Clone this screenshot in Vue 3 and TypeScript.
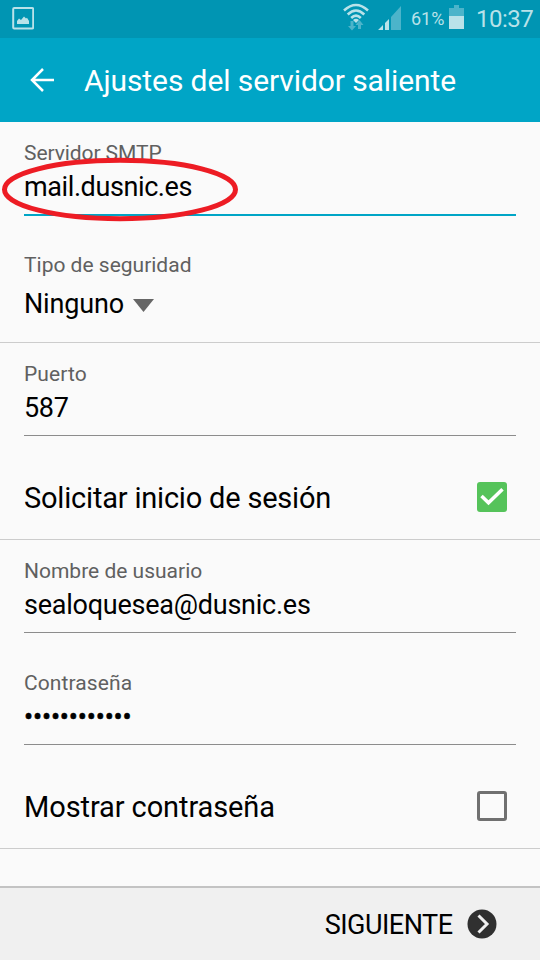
<script setup lang="ts">
import { ref } from 'vue'

const server = ref('mail.dusnic.es')
const security = ref('Ninguno')
const port = ref('587')
const user = ref('sealoquesea@dusnic.es')
const passwordLength = 12
const loginRequired = ref(true)
const showPassword = ref(false)
</script>

<template>
  <div class="screen">
    <div class="status">
      <svg class="picture" width="22" height="23" viewBox="0 0 22 23">
        <rect x="1.200" y="1" width="20" height="20.500" rx="1" fill="none" stroke="#b9e2e9" stroke-width="2" />
        <path d="M5 17V14l2-2.500 2 1.500 3-3.500 2 2 1-.8 2 3.300V17z" fill="#b9e2e9" />
      </svg>
      <svg class="wifi" width="26" height="28" viewBox="0 0 26 28">
        <g fill="none" stroke="#b9e2e9" stroke-width="2.500">
          <path d="M1 7.500Q13-3.500 25 7.500" />
          <path d="M4.700 11.500Q13 3.500 21.300 11.500" />
          <path d="M8.200 15Q13 10.200 17.800 15" />
        </g>
        <path d="M10 17Q13 14.600 16 17L13 20z" fill="#b9e2e9" />
        <path d="M7.500 18h3v5h2.500l-4 4.500-4-4.500h2.500zM15 26h3v-4h2.500l-4-5-4 5H15z" fill="#4cb4ca" />
      </svg>
      <svg class="signal" width="24" height="24" viewBox="0 0 24 24">
        <path d="M13 11L23 0v24H13z" fill="#4cb4ca" />
        <path d="M0 24l5-5v5zM7 17l4-4v11H7z" fill="#b9e2e9" />
      </svg>
      <span class="percent">61%</span>
      <svg class="battery" width="15" height="24" viewBox="0 0 15 24">
        <path d="M0 3h5V0h5v3h5v8H0z" fill="#4cb4ca" />
        <path d="M0 11h15v13H0z" fill="#b9e2e9" />
      </svg>
      <span class="clock">10:37</span>
    </div>

    <header class="header">
      <svg class="back" width="24" height="24" viewBox="0 0 24 24" fill="none" stroke="#fff" stroke-width="2.500">
        <path d="M13 1L2 12l11 11M2 12h22" />
      </svg>
      <h1 class="title">Ajustes del servidor saliente</h1>
    </header>

    <main class="form">
      <section class="group server">
        <div class="field active">
          <div class="label l-server">Servidor SMTP</div>
          <div class="value v-server">{{ server }}</div>
          <svg class="mark" width="238" height="66" viewBox="0 0 238 66">
            <ellipse cx="120" cy="33.500" rx="115.500" ry="29.200" fill="none" stroke="#ed1c24" stroke-width="5" />
          </svg>
        </div>
        <div class="select">
          <div class="label">Tipo de seguridad</div>
          <div class="choice">
            <span class="value v-security">{{ security }}</span>
            <svg class="caret" width="21" height="13" viewBox="0 0 21 13"><path d="M0 0h21L10.500 13z" fill="#666" /></svg>
          </div>
        </div>
      </section>

      <section class="group port">
        <div class="field">
          <div class="label l-port">Puerto</div>
          <div class="value v-port">{{ port }}</div>
        </div>
        <div class="option" @click="loginRequired = !loginRequired">
          <span class="option-text o-login">Solicitar inicio de sesión</span>
          <span class="box" :class="{ checked: loginRequired }">
            <svg v-if="loginRequired" width="30" height="30" viewBox="0 0 30 30">
              <path d="M4.500 14l7 6.800L25.500 7.200" fill="none" stroke="#fff" stroke-width="3.500" />
            </svg>
          </span>
        </div>
      </section>

      <section class="group account">
        <div class="field">
          <div class="label">Nombre de usuario</div>
          <div class="value v-user">{{ user }}</div>
        </div>
        <div class="field password">
          <div class="label l-pass">Contraseña</div>
          <div class="value dots">{{ '•'.repeat(passwordLength) }}</div>
        </div>
        <div class="option" @click="showPassword = !showPassword">
          <span class="option-text o-show">Mostrar contraseña</span>
          <span class="box" :class="{ checked: showPassword }"></span>
        </div>
      </section>
    </main>

    <footer class="footer">
      <span class="next">SIGUIENTE</span>
      <svg class="arrow" width="30" height="30" viewBox="0 0 30 30">
        <circle cx="15" cy="15" r="14.500" fill="#303030" />
        <path d="M11.500 6.500l8.500 8.500-8.500 8.500" fill="none" stroke="#f0f0f0" stroke-width="3" />
      </svg>
    </footer>
  </div>
</template>

<style>
body {
  margin: 0;
}
</style>

<style scoped>
.screen {
  width: 540px;
  height: 960px;
  display: flex;
  flex-direction: column;
  overflow: hidden;
  background: #fafafa;
  color: #000;
  font-family: Roboto, sans-serif;
}
.screen span,
.label,
.value,
.title {
  white-space: nowrap;
}
.status {
  height: 38px;
  box-sizing: border-box;
  flex: none;
  display: flex;
  align-items: flex-start;
  padding: 0 8px 0 12px;
  background: #0095b3;
  color: #b9e2e9;
}
.picture {
  margin: 7px auto 0 0;
}
.wifi {
  margin-top: 3px;
}
.signal {
  margin: 6px 0 0 9px;
}
.percent {
  width: 33px;
  margin: 8px 0 0 9px;
  font-size: 18px;
  line-height: 22px;
}
.battery {
  margin: 5px 0 0 5px;
}
.clock {
  width: 56px;
  margin: 4px 0 0 12px;
  font-size: 24px;
  line-height: 30px;
  letter-spacing: -0.5px;
}
.header {
  height: 84px;
  flex: none;
  display: flex;
  align-items: center;
  padding-left: 30px;
  background: #00a5c6;
}
.title {
  margin: 2px 0 0 30px;
  color: #fff;
  font-size: 30px;
  font-weight: 400;
  line-height: 36px;
  letter-spacing: -0.1px;
}
.form {
  flex: 1;
}
.group {
  box-sizing: border-box;
  padding-top: 18px;
  border-bottom: 1px solid #ccc;
}
.server {
  height: 221px;
}
.port {
  height: 197px;
}
.account {
  height: 309px;
}
.field {
  box-sizing: border-box;
  height: 75px;
  margin: 0 24px;
  border-bottom: 1px solid #8c8c8c;
}
.active {
  position: relative;
  height: 76px;
  border-bottom: 2px solid #00a5c6;
}
.mark {
  position: absolute;
  left: -24px;
  top: 16px;
}
.label {
  color: #606060;
  font-size: 21px;
  line-height: 26px;
}
.l-server {
  letter-spacing: -0.08px;
}
.l-port,
.l-pass {
  letter-spacing: 0.1px;
}
.value {
  margin-top: 5px;
  font-size: 27px;
  line-height: 32px;
}
.v-server {
  letter-spacing: -0.4px;
}
.v-security {
  letter-spacing: -0.15px;
}
.v-port {
  letter-spacing: -0.3px;
}
.v-user {
  letter-spacing: -0.24px;
}
.select {
  margin: 36px 24px 0;
}
.choice {
  display: flex;
  align-items: center;
  gap: 9px;
  margin-top: 10px;
}
.choice .value {
  margin: 0;
}
.caret {
  margin-top: 2px;
}
.password {
  margin-top: 37px;
}
.dots {
  margin-top: 5px;
  letter-spacing: -0.15px;
  -webkit-text-stroke: 0.5px #000;
}
.option {
  display: flex;
  align-items: center;
  justify-content: space-between;
  height: 103px;
  box-sizing: border-box;
  padding: 20px 33px 0 24px;
}
.option-text {
  font-size: 29px;
  line-height: 36px;
}
.o-login {
  letter-spacing: -0.2px;
}
.o-show {
  letter-spacing: -0.1px;
}
.box {
  box-sizing: border-box;
  width: 30px;
  height: 30px;
  margin-bottom: 2px;
  border: 3px solid #707070;
  border-radius: 3px;
}
.box.checked {
  border: 0;
  background: #55c35a;
}
.box svg {
  display: block;
}
.footer {
  box-sizing: border-box;
  height: 74px;
  flex: none;
  display: flex;
  align-items: center;
  justify-content: flex-end;
  gap: 14px;
  padding-right: 43.5px;
  border-top: 2px solid #c3c3c3;
  background: #f0f0f0;
}
.next {
  margin-top: 2px;
  font-size: 27px;
  line-height: 32px;
  letter-spacing: -0.5px;
}
.arrow {
  margin-bottom: 1px;
}
</style>
